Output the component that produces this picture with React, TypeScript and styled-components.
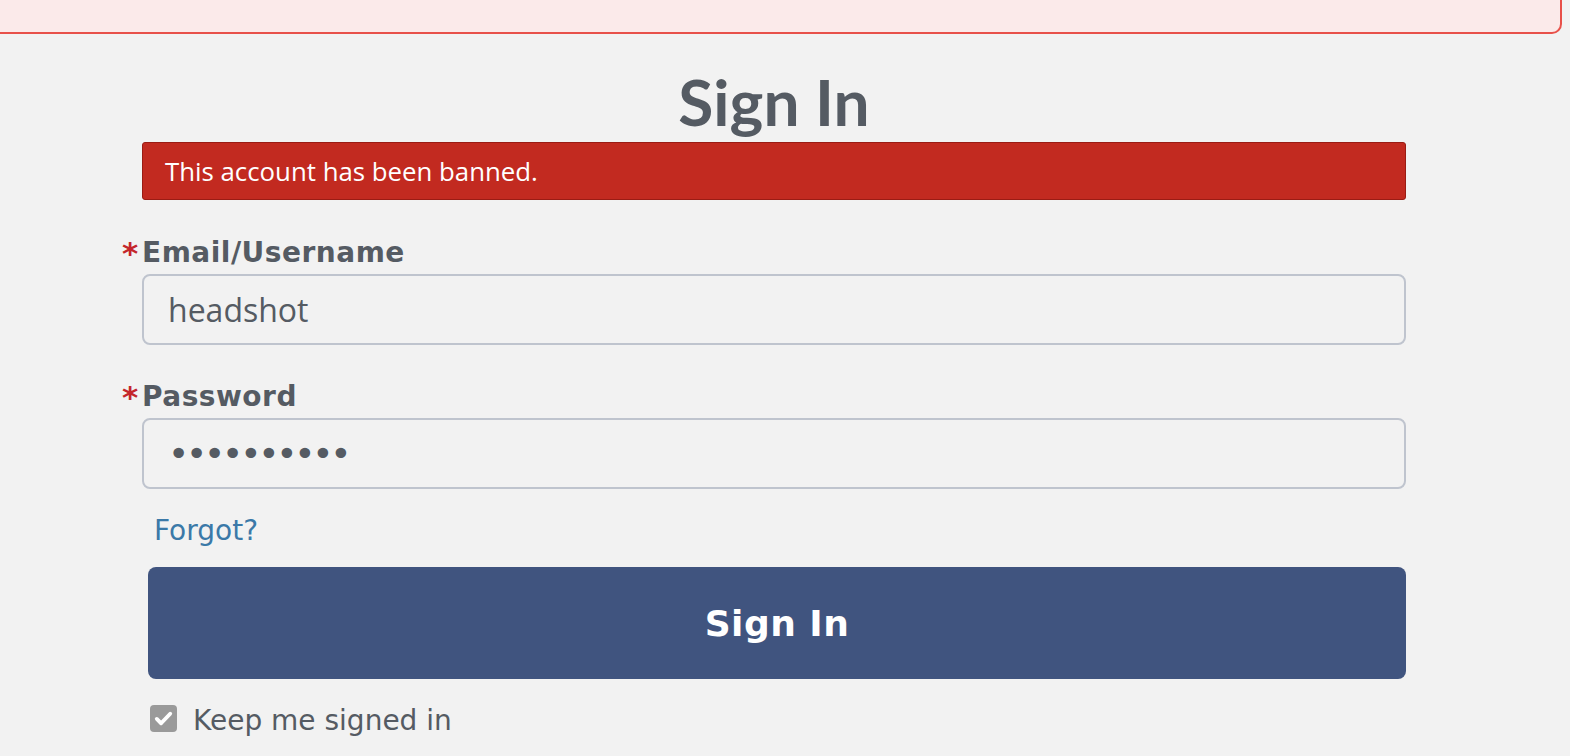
import React from 'react'
import styled, { createGlobalStyle } from 'styled-components'

const GlobalStyle = createGlobalStyle`
  html, body {
    margin: 0;
    padding: 0;
    background: #f2f2f2;
    overflow: hidden;
  }
  * {
    box-sizing: border-box;
  }
`

const Page = styled.div`
  min-height: 100vh;
  background: #f2f2f2;
  color: #555b63;
`

const NoticeBanner = styled.div`
  height: 34px;
  width: 1572px;
  margin-left: -10px;
  background: #fbeaea;
  border-right: 2px solid #e8514a;
  border-bottom: 2px solid #e8514a;
  border-radius: 0 0 10px 0;
`

const FormColumn = styled.form`
  width: 1264px;
  margin: 36px 0 0 142px;
  display: flex;
  flex-direction: column;
`

const Title = styled.h1`
  margin: 0;
  font-family: Lato, 'Open Sans', sans-serif;
  font-weight: 700;
  font-size: 64px;
  line-height: 64px;
  text-align: center;
  color: #555b63;
`

const ErrorBox = styled.div`
  margin-top: 8px;
  height: 58px;
  padding: 12px 22px;
  background: #c22a20;
  border: 1px solid #9a1c14;
  border-radius: 3px;
  color: #fff;
  font-family: 'Open Sans', sans-serif;
  font-size: 25.8px;
  line-height: 32px;
`

const Field = styled.div<{ $first?: boolean }>`
  margin-top: ${(p) => (p.$first ? '38px' : '37px')};
  display: flex;
  flex-direction: column;
  gap: 6px;
`

const Label = styled.label`
  display: flex;
  margin-left: -20px;
  font-family: 'DejaVu Sans', Verdana, sans-serif;
  font-weight: 700;
  font-size: 28px;
  line-height: 30px;
  letter-spacing: 0.5px;
  color: #555b63;
`

const Required = styled.span`
  width: 20px;
  color: #c4262b;
  font-size: 31px;
  letter-spacing: 0;
`

const TextInput = styled.input<{ $secret?: boolean }>`
  height: 71px;
  width: 100%;
  padding: 0 24px;
  background: #f2f2f2;
  border: 2px solid #bfc4ce;
  border-radius: 8px;
  outline: none;
  color: #555b63;
  font-family: ${(p) => (p.$secret ? "'DejaVu Sans', sans-serif" : "'Open Sans', sans-serif")};
  font-size: ${(p) => (p.$secret ? '36px' : '32px')};
  letter-spacing: ${(p) => (p.$secret ? '-3.2px' : '0')};
`

const ForgotLink = styled.a`
  align-self: flex-start;
  margin: 26px 0 0 12px;
  font-family: 'DejaVu Sans', Verdana, sans-serif;
  font-size: 28px;
  line-height: 32px;
  color: #3b79a8;
  text-decoration: none;
`

const SubmitButton = styled.button`
  margin: 20px 0 0 6px;
  height: 112px;
  border: none;
  border-radius: 8px;
  background: #40547f;
  color: #fff;
  font-family: 'DejaVu Sans', Verdana, sans-serif;
  font-weight: 700;
  font-size: 36px;
  letter-spacing: 0.5px;
  cursor: pointer;
`

const KeepRow = styled.label`
  margin: 26px 0 0 8px;
  display: flex;
  align-items: flex-start;
  gap: 16px;
  font-family: 'DejaVu Sans', Verdana, sans-serif;
  font-size: 28px;
  line-height: 32px;
  color: #555b63;
`

const CheckBox = styled.span`
  width: 27px;
  height: 27px;
  border-radius: 4px;
  background: #9a9a9a;
  display: flex;
  align-items: center;
  justify-content: center;
`

export default function App() {
  return (
    <Page>
      <GlobalStyle />
      <NoticeBanner />
      <FormColumn onSubmit={(e) => e.preventDefault()}>
        <Title>Sign In</Title>
        <ErrorBox>This account has been banned.</ErrorBox>

        <Field $first>
          <Label>
            <Required>*</Required>Email/Username
          </Label>
          <TextInput defaultValue="headshot" />
        </Field>

        <Field>
          <Label>
            <Required>*</Required>Password
          </Label>
          <TextInput $secret type="password" defaultValue="qwertyuiop" />
        </Field>

        <ForgotLink href="#">Forgot?</ForgotLink>

        <SubmitButton type="submit">Sign In</SubmitButton>

        <KeepRow>
          <CheckBox>
            <svg width="23" height="23" viewBox="0 0 24 24">
              <path d="M5 12.5l4.5 4.5L19 7" fill="none" stroke="#fff" strokeWidth="4" strokeLinecap="round" strokeLinejoin="round" />
            </svg>
          </CheckBox>
          Keep me signed in
        </KeepRow>
      </FormColumn>
    </Page>
  )
}
